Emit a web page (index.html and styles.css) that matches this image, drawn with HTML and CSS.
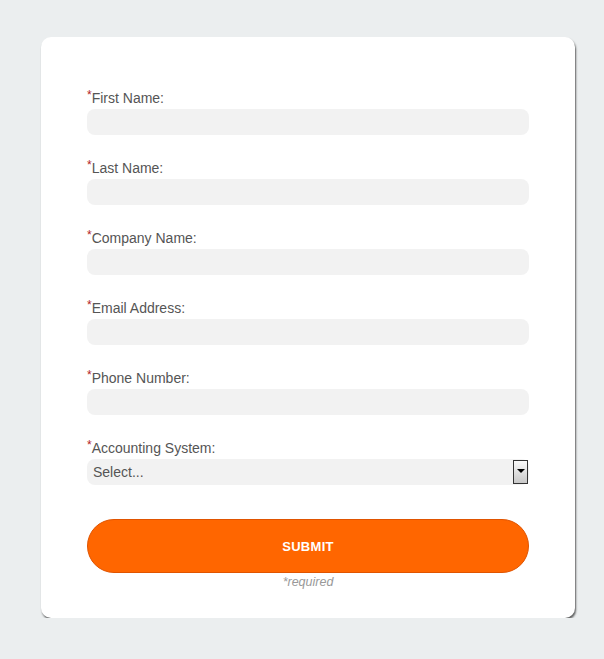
FILE: index.html
```html
<!DOCTYPE html>
<html>
<head>
<meta charset="utf-8">
<link rel="stylesheet" href="styles.css">
</head>
<body>
<div class="card">
  <form class="form">
    <div class="field">
      <label class="label"><span class="req">*</span>First Name:</label>
      <div class="input"></div>
    </div>
    <div class="field">
      <label class="label"><span class="req">*</span>Last Name:</label>
      <div class="input"></div>
    </div>
    <div class="field">
      <label class="label"><span class="req">*</span>Company Name:</label>
      <div class="input"></div>
    </div>
    <div class="field">
      <label class="label"><span class="req">*</span>Email Address:</label>
      <div class="input"></div>
    </div>
    <div class="field">
      <label class="label"><span class="req">*</span>Phone Number:</label>
      <div class="input"></div>
    </div>
    <div class="field last">
      <label class="label"><span class="req">*</span>Accounting System:</label>
      <div class="input select">
        <span class="select-text">Select...</span>
        <span class="arrow"><span class="tri"></span></span>
      </div>
    </div>
    <div class="submit">SUBMIT</div>
    <div class="required">*required</div>
  </form>
</div>
</body>
</html>
```
FILE: styles.css
```css
html, body {
  margin: 0;
  padding: 0;
  background: #ebeeef;
  font-family: "Liberation Sans", Arial, sans-serif;
}
.card {
  margin: 37px 0 0 41px;
  width: 534px;
  height: 581px;
  box-sizing: border-box;
  background: #fff;
  border-radius: 10px;
  padding: 52px 46px 28px;
  box-shadow: 1px 2px 2px rgba(0, 0, 0, 0.6);
}
.form {
  display: flex;
  flex-direction: column;
}
.field {
  display: flex;
  flex-direction: column;
  margin-bottom: 24px;
}
.field.last {
  margin-bottom: 34px;
}
.label {
  font-size: 14px;
  line-height: 17px;
  color: #555;
  height: 17px;
  padding-top: 1px;
}
.req {
  color: #b22222;
  font-size: 12px;
  position: relative;
  top: -4px;
}
.input {
  margin-top: 2px;
  height: 26px;
  background: #f2f2f2;
  border-radius: 8px;
}
.select {
  display: flex;
  align-items: center;
  justify-content: space-between;
  padding: 0 1px 0 6px;
}
.select-text {
  font-size: 14px;
  color: #555;
}
.arrow {
  width: 13px;
  height: 22px;
  border: 1px solid #333;
  background: linear-gradient(#fafafa, #c8c8c8);
  display: flex;
  align-items: center;
  justify-content: center;
}
.tri {
  width: 0;
  height: 0;
  border-left: 4px solid transparent;
  border-right: 4px solid transparent;
  border-top: 4px solid #000;
  margin-top: -2px;
}
.submit {
  height: 54px;
  box-sizing: border-box;
  border: 1px solid #e05400;
  background: #ff6600;
  border-radius: 27px;
  color: #fff;
  font-weight: bold;
  font-size: 13px;
  display: flex;
  align-items: center;
  justify-content: center;
  letter-spacing: 0.3px;
}
.required {
  margin-top: 1px;
  text-align: center;
  font-style: italic;
  font-size: 12.5px;
  line-height: 16px;
  color: #999;
}
```
